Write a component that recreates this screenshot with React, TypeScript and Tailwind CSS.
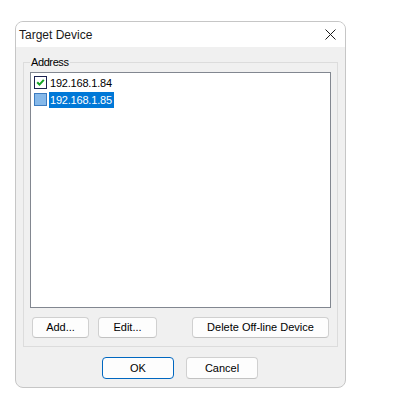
import React from 'react';

const devices = [
  { ip: '192.168.1.84', checked: true, selected: false },
  { ip: '192.168.1.85', checked: false, selected: true },
];

const Button: React.FC<{ label: string; width: string; primary?: boolean; height?: string }> = ({ label, width, primary, height = 'h-[21px]' }) => (
  <button
    className={`${width} ${height} flex items-center justify-center rounded-[4px] border bg-[#fdfdfd] text-[11px] text-black ${
      primary ? 'border-[#0067c0]' : 'border-[#d0d0d0] border-b-[#c2c2c2]'
    }`}
  >
    {label}
  </button>
);

const CheckBox: React.FC<{ checked: boolean; selected: boolean }> = ({ checked, selected }) => (
  <span
    className={`w-[13px] h-[13px] shrink-0 border flex items-center justify-center ${
      selected ? 'border-[#3d7cc0] bg-[#86b9ea]' : 'border-[#1c2350] bg-white'
    }`}
  >
    {checked && (
      <svg width="9" height="9" viewBox="0 0 9 9">
        <path d="M1.2 4.2 L3.5 6.6 L7.8 1.8" fill="none" stroke="#13a324" strokeWidth="2" />
      </svg>
    )}
  </span>
);

const App: React.FC = () => {
  return (
    <div className="w-[403px] h-[418px] bg-white pt-[21px] pl-[15px]" style={{ fontFamily: '"Liberation Sans", Arial, sans-serif' }}>
      <div className="w-[331px] h-[367px] border border-[#c6c6c6] rounded-[8px] bg-[#f0f0f0] overflow-hidden flex flex-col">
        {/* title bar */}
        <div className="h-[25px] bg-white flex items-center justify-between pl-[3px] pr-[9px]">
          <span className="text-[12px] text-[#1a1a1a]">Target Device</span>
          <svg width="11" height="11" viewBox="0 0 11 11">
            <path d="M0.5 0.5 L10.5 10.5 M10.5 0.5 L0.5 10.5" stroke="#1a1a1a" strokeWidth="1" />
          </svg>
        </div>

        {/* group box */}
        <div className="relative mt-[15px] ml-[7px] w-[315px] h-[285px] border border-[#dcdcdc] pl-[6px] pt-[9px] flex flex-col">
          <span className="absolute -top-[8px] left-[6px] px-[1px] bg-[#f0f0f0] text-[11px] leading-[14px] tracking-[-0.4px] text-black">
            Address
          </span>
          <div className="w-[301px] h-[236px] border border-[#828790] bg-white pt-[1px] pl-[3px]">
            {devices.map(d => (
              <div key={d.ip} className="h-[17px] flex items-center gap-[2px]">
                <CheckBox checked={d.checked} selected={d.selected} />
                <span
                  className={`text-[11px] leading-[16px] h-[16px] pl-[1px] pr-[2px] tracking-[-0.2px] ${
                    d.selected ? 'bg-[#0078d7] text-white' : 'text-black'
                  }`}
                >
                  {d.ip}
                </span>
              </div>
            ))}
          </div>
          <div className="mt-[9px] w-[301px] flex items-center justify-between px-[2px]">
            <div className="flex gap-[9px]">
              <Button label="Add..." width="w-[57px]" />
              <Button label="Edit..." width="w-[59px]" />
            </div>
            <Button label="Delete Off-line Device" width="w-[137px]" />
          </div>
        </div>

        {/* dialog buttons */}
        <div className="mt-[10px] pl-[86px] flex gap-[12px]">
          <Button label="OK" width="w-[72px]" height="h-[22px]" primary />
          <Button label="Cancel" width="w-[72px]" height="h-[22px]" />
        </div>
      </div>
    </div>
  );
};

export default App;
